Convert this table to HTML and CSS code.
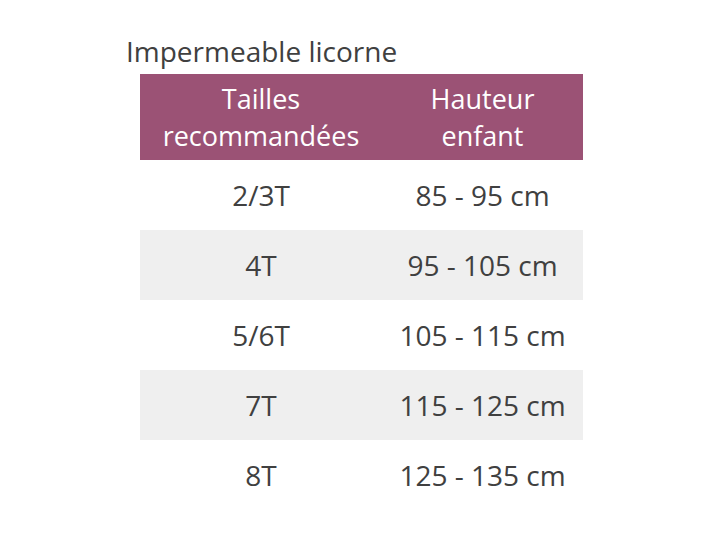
FILE: index.html
```html
<!DOCTYPE html>
<html lang="fr">
<head>
<meta charset="utf-8">
<link rel="stylesheet" href="styles.css">
</head>
<body>
<div class="page">
  <h1 class="title">Impermeable licorne</h1>
  <div class="table">
    <div class="row head">
      <div class="cell">Tailles<br>recommandées</div>
      <div class="cell">Hauteur<br>enfant</div>
    </div>
    <div class="row"><div class="cell">2/3T</div><div class="cell">85 - 95 cm</div></div>
    <div class="row alt"><div class="cell">4T</div><div class="cell">95 - 105 cm</div></div>
    <div class="row"><div class="cell">5/6T</div><div class="cell">105 - 115 cm</div></div>
    <div class="row alt"><div class="cell">7T</div><div class="cell">115 - 125 cm</div></div>
    <div class="row"><div class="cell">8T</div><div class="cell">125 - 135 cm</div></div>
  </div>
</div>
</body>
</html>
```

FILE: styles.css
```css
html, body {
  margin: 0;
  padding: 0;
  background: #ffffff;
}
body {
  font-family: "Open Sans", "Liberation Sans", sans-serif;
  color: #404040;
}
.page {
  display: flex;
  flex-direction: column;
  padding: 33px 0 0 126px;
}
.title {
  margin: 0;
  font-size: 28px;
  font-weight: 500;
  line-height: 36px;
  color: #404040;
}
.table {
  margin: 5px 0 0 14px;
  width: 443px;
  display: flex;
  flex-direction: column;
}
.row {
  display: grid;
  grid-template-columns: 242px 201px;
  height: 70px;
  align-items: center;
  font-size: 28px;
  font-weight: 500;
  line-height: 70px;
}
.row .cell {
  text-align: center;
}
.row.alt {
  background: #efefef;
}
.row.head {
  height: 86px;
  background: #9b5275;
  color: #ffffff;
  font-size: 27px;
  line-height: 37px;
}
```
